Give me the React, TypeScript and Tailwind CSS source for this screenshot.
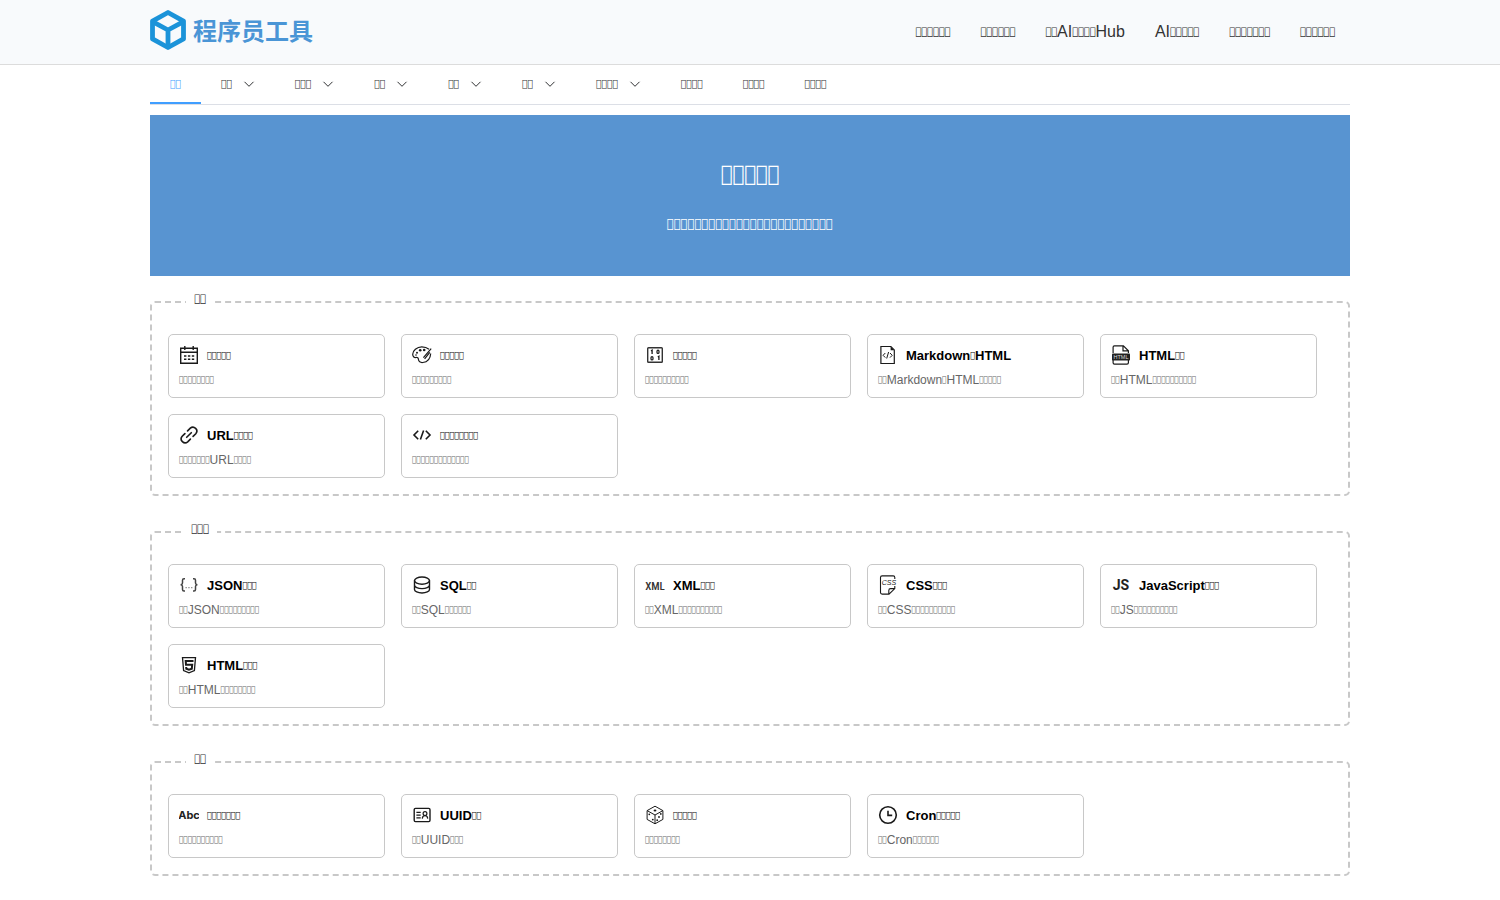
import type { ReactNode } from "react";

// "□" in the labels below stands for a code point that no font covers,
// so the browser draws the font's own missing-glyph box.
function Label({ text }: { text: string }) {
  return text.split(/(□+)/).map((part, i) =>
    part.startsWith("□") ? (
      <span key={i} className="align-[0.2em] font-['DejaVu_Sans_Condensed','DejaVu_Sans',sans-serif] text-[0.675em] leading-none font-normal">
        {part.replace(/□/g, "\uE000")}
      </span>
    ) : (
      part
    ),
  );
}

const headerLinks = ["□□□□□□", "□□□□□□", "□□AI□□□□Hub", "AI□□□□□", "□□□□□□□", "□□□□□□"];

const tabs = [
  { label: "□□", active: true },
  { label: "□□", menu: true },
  { label: "□□□", menu: true },
  { label: "□□", menu: true },
  { label: "□□", menu: true },
  { label: "□□", menu: true },
  { label: "□□□□", menu: true },
  { label: "□□□□" },
  { label: "□□□□" },
  { label: "□□□□" },
];

function Svg({ children }: { children: ReactNode }) {
  return (
    <svg viewBox="0 0 20 20" className="size-5 shrink-0" fill="none" stroke="#1a1a1a" strokeWidth="1.4" aria-hidden="true">
      {children}
    </svg>
  );
}

const icons: Record<string, ReactNode> = {
  calendar: (
    <Svg>
      <path d="M1.700 3.200h16.600v15H1.700zM1.700 7.200h16.600M5.800 1v4M14.200 1v4" />
      <path d="M5 11h2.400M8.900 11h2.400M12.800 11h2.400M5 14.300h2.400M8.900 14.300h2.400M12.800 14.300h2.400" />
    </Svg>
  ),
  palette: (
    <Svg>
      <path strokeWidth="1.2" d="M17 4.200C15 2.500 12.600 1.800 9.800 1.800 4.800 1.800.7 5.800.7 9.200c0 2.600 1.700 3.700 3.300 3.300 1.500-.4 2.300.3 2.400 1.800.2 2.200 1.900 3.500 4.400 3.200 4.500-.5 7.600-4 7.900-9" />
      <path strokeWidth="1.200" d="M19.200 3.600 11.400 12.600M17.800 7.400 12.600 13.800" />
      <g fill="#1a1a1a" stroke="none">
        <circle cx="8.200" cy="5.200" r="1.300" />
        <circle cx="12.200" cy="5" r="1.300" />
        <circle cx="5" cy="7.800" r="1" />
        <circle cx="4" cy="10" r=".8" />
      </g>
    </Svg>
  ),
  binary: (
    <Svg>
      <rect x="2.700" y="2.700" width="14.600" height="14.600" rx=".8" stroke="#333" />
      <path d="M6 5.900l1.100-.7v3.800M12.800 12l1.100-.7v3.800" strokeWidth="1.300" />
      <rect x="12" y="5.200" width="2" height="3.200" rx="1" strokeWidth="1.200" />
      <rect x="6" y="11.700" width="2" height="3.200" rx="1" strokeWidth="1.200" />
    </Svg>
  ),
  fileCode: (
    <Svg>
      <path d="M2.900 1.500h10l3.400 3.400v13.600H2.900z" strokeWidth="1.200" />
      <path d="M12.600 1.500v3.700h3.700z" fill="#1a1a1a" stroke="none" />
      <path d="M7.300 8 5.100 10.300l2.200 2.300M12 8l2.200 2.300-2.200 2.300M10.600 7l-1.900 6.500" strokeWidth="1" />
    </Svg>
  ),
  fileHtml: (
    <Svg>
      <path d="M2.100 8V2.200Q2.100.9 3.400.9h9L17.400 5.700V8M2.100 14v3.800q0 1.400 1.400 1.400h12.500q1.400 0 1.400-1.400V14M12 1v4.900h5.300" strokeWidth="1.200" />
      <rect x="1" y="8.500" width="18" height="7" rx=".8" fill="#222" stroke="none" />
      <text x="10" y="14" textAnchor="middle" fontSize="5.500" fill="#ddd" stroke="none" fontFamily="Liberation Sans, sans-serif">HTML</text>
    </Svg>
  ),
  link: (
    <Svg>
      <path strokeWidth="1.600" strokeLinecap="round" d="M8.600 5.900 11.300 3.200a3.900 3.900 0 0 1 5.500 5.500L14.100 11.400M11.400 14.100 8.700 16.800a3.900 3.900 0 0 1-5.500-5.500L5.900 8.600M7.700 12.300l4.600-4.600" />
    </Svg>
  ),
  code: (
    <Svg>
      <path strokeWidth="1.600" d="M6.200 5.800 2 10l4.200 4.200M13.800 5.800 18 10l-4.200 4.200M11.600 5.600 8.400 14.400" />
    </Svg>
  ),
  json: (
    <Svg>
      <path stroke="#444" strokeWidth="1.500" d="M6 3.700H5q-1.500 0-1.500 1.500v2.900q0 1.600-1.900 1.700 1.900.1 1.900 1.700v2.900q0 1.500 1.500 1.500h1M14 3.700h1q1.500 0 1.500 1.500v2.900q0 1.600 1.900 1.700-1.900.1-1.900 1.700v2.900q0 1.500-1.500 1.500h-1" />
      <path stroke="#888" strokeWidth="1.300" d="M6.500 12.700h1.300M9.300 12.700h1.300M12.100 12.700h1.300" />
    </Svg>
  ),
  database: (
    <Svg>
      <ellipse cx="10" cy="5.600" rx="7.500" ry="3.600" />
      <path d="M2.500 5.600v8.800C2.500 16.400 5.900 18 10 18s7.500-1.600 7.500-3.600V5.600M2.500 10c0 2 3.400 3.600 7.500 3.600s7.500-1.600 7.500-3.600" />
    </Svg>
  ),
  xml: (
    <Svg>
      <text x="10" y="14.500" textAnchor="middle" fontSize="11" fill="#333" stroke="none" fontWeight="500" fontFamily="Roboto Condensed, Roboto, sans-serif">XML</text>
    </Svg>
  ),
  css: (
    <Svg>
      <path strokeWidth="1.100" d="M16.800 4V2.500Q16.800.9 15.200.9H4.100Q2.500.9 2.500 2.500v15q0 1.600 1.600 1.600H11l5.800-5.500V11M10.800 19v-3.600q0-1.800 1.800-1.800h4.100" />
      <text x="11" y="10" textAnchor="middle" fontSize="7" fontStyle="italic" fill="#222" stroke="none" fontFamily="Liberation Sans, sans-serif">CSS</text>
    </Svg>
  ),
  js: (
    <Svg>
      <text x="10" y="15" textAnchor="middle" fontSize="14" fill="#222" stroke="none" fontWeight="700" fontFamily="Roboto, sans-serif">JS</text>
    </Svg>
  ),
  html5: (
    <Svg>
      <path strokeWidth="1.300" d="M3.500 2.600h13l-1.100 13L10 17.800l-5.400-2.200z" />
      <path strokeWidth="2" d="M14.500 5.900H6.700l.3 3.800h6.200l-.4 4-2.800 1-2.700-1-.1-1.700" />
    </Svg>
  ),
  abc: (
    <Svg>
      <text x="10" y="14" textAnchor="middle" fontSize="11" fill="#222" stroke="none" fontWeight="700" fontFamily="Inter, sans-serif">Abc</text>
    </Svg>
  ),
  idCard: (
    <Svg>
      <rect x="2.200" y="3.400" width="15.800" height="13.200" rx="1.300" />
      <path strokeWidth="1.200" d="M4.400 7.300h4.300M4.400 10.100h4.300M4.400 12.900h4.300M10.300 13.600c.1-2 1-3 2.700-3s2.600 1 2.700 3" />
      <circle cx="13" cy="8.600" r="1.900" strokeWidth="1.200" />
    </Svg>
  ),
  dice: (
    <Svg>
      <path strokeWidth="1" d="M10 1.200 17.900 5.600v8.800L10 18.800 2.100 14.400V5.600zM2.100 5.600 10 10l7.900-4.400M10 10v8.800" />
      <g fill="#1a1a1a" stroke="none">
        <ellipse cx="10" cy="5.500" rx="1.400" ry=".9" />
        <circle cx="4.300" cy="9.300" r=".9" />
        <circle cx="7.800" cy="14.600" r=".9" />
        <circle cx="12.200" cy="15.200" r=".9" />
        <circle cx="14" cy="12" r=".9" />
        <circle cx="15.800" cy="8.900" r=".9" />
      </g>
    </Svg>
  ),
  clock: (
    <Svg>
      <circle cx="10" cy="10" r="8.300" strokeWidth="1.600" />
      <path strokeWidth="1.600" d="M10 5.800v4.600h4.200" />
    </Svg>
  ),
};

type Tool = { icon: string; title: string; text: string };

const sections: { title: string; tools: Tool[] }[] = [
  {
    title: "□□",
    tools: [
      { icon: "calendar", title: "□□□□□", text: "□□□□□□□□" },
      { icon: "palette", title: "□□□□□", text: "□□□□□□□□□" },
      { icon: "binary", title: "□□□□□", text: "□□□□□□□□□□" },
      { icon: "fileCode", title: "Markdown□HTML", text: "□□Markdown□HTML□□□□□" },
      { icon: "fileHtml", title: "HTML□□", text: "□□HTML□□□□□□□□□□" },
      { icon: "link", title: "URL□□□□", text: "□□□□□□□URL□□□□" },
      { icon: "code", title: "□□□□□□□□", text: "□□□□□□□□□□□□□" },
    ],
  },
  {
    title: "□□□",
    tools: [
      { icon: "json", title: "JSON□□□", text: "□□JSON□□□□□□□□□" },
      { icon: "database", title: "SQL□□", text: "□□SQL□□□□□□" },
      { icon: "xml", title: "XML□□□", text: "□□XML□□□□□□□□□□" },
      { icon: "css", title: "CSS□□□", text: "□□CSS□□□□□□□□□□" },
      { icon: "js", title: "JavaScript□□□", text: "□□JS□□□□□□□□□□" },
      { icon: "html5", title: "HTML□□□", text: "□□HTML□□□□□□□□" },
    ],
  },
  {
    title: "□□",
    tools: [
      { icon: "abc", title: "□□□□□□□", text: "□□□□□□□□□□" },
      { icon: "idCard", title: "UUID□□", text: "□□UUID□□□" },
      { icon: "dice", title: "□□□□□", text: "□□□□□□□□" },
      { icon: "clock", title: "Cron□□□□□", text: "□□Cron□□□□□□" },
    ],
  },
];

function Logo() {
  return (
    <a href="#" className="flex items-center gap-[7px]">
      <svg viewBox="0 0 36 40" className="h-10 w-9" fill="none" stroke="#1b93d9" strokeWidth="4.800" strokeLinejoin="round" aria-hidden="true">
        <path d="M18 2.500 33.500 11.100v17.800L18 37.500 2.500 28.900V11.100z" />
        <path d="M3 11.800 18 20l15-8.200M18 20v17" />
      </svg>
      <span className="font-['Noto_Sans_CJK_SC',sans-serif] text-2xl leading-[38px] font-bold text-[#4a95d6]">程序员工具</span>
    </a>
  );
}

function ToolCard({ icon, title, text }: Tool) {
  return (
    <a href="#" className="flex flex-col gap-1.5 rounded-[5px] border border-[#c8c8c8] px-2.5 pt-2.5 pb-2">
      <span className="flex h-5 items-center gap-2">
        {icons[icon]}
        <strong className="pt-0.5 text-[13px] leading-5 font-bold text-black">
          <Label text={title} />
        </strong>
      </span>
      <span className="text-xs leading-[18px] text-[#666]">
        <Label text={text} />
      </span>
    </a>
  );
}

export default function App() {
  return (
    <div className="min-h-screen bg-white pb-6 font-['Liberation_Sans',sans-serif] text-[#303133]">
      <header className="border-b border-[#dcdcdc] bg-[#f8fafc]">
        <div className="mx-auto flex max-w-[1200px] items-start justify-between py-2.5">
          <Logo />
          <nav className="flex gap-[30px] pr-[15px]">
            {headerLinks.map((label, i) => (
              <a key={i} href="#" className="text-base leading-[44px] text-[#333]">
                <Label text={label} />
              </a>
            ))}
          </nav>
        </div>
      </header>

      <main className="mx-auto max-w-[1200px]">
        <nav className="flex border-b border-[#dcdfe6]">
          {tabs.map(({ label, active, menu }, i) => (
            <a
              key={i}
              href="#"
              className={
                active
                  ? "flex h-[39px] items-center border-b-2 border-[#409eff] px-5 text-[15px] text-[#409eff]"
                  : "flex h-[39px] items-center border-b-2 border-transparent px-5 text-[15px] text-[#303133]"
              }
            >
              <span className="pt-0.5">
                <Label text={label} />
              </span>
              {menu && (
                <svg viewBox="0 0 12 12" className="ml-[11px] size-3" fill="none" stroke="#303133" aria-hidden="true">
                  <path d="M1.500 3.800 6 8.300l4.500-4.500" />
                </svg>
              )}
            </a>
          ))}
        </nav>

        <div className="mt-2.5 flex flex-col items-center gap-5 bg-[#5894d1] pt-10 pb-[39px] text-white">
          <h1 className="text-[32px] leading-[38px]">
            <Label text="□□□□□" />
          </h1>
          <p className="text-[19px] leading-6">
            <Label text="□□□□□□□□□□□□□□□□□□□□□□□□" />
          </p>
        </div>

        <div className="mt-[25px] flex flex-col gap-[35px]">
          {sections.map(({ title, tools }, i) => (
            <section key={i} className="relative rounded-[5px] border-2 border-dashed border-[#c8c8c8] pt-[31px] pr-[31px] pb-4 pl-4">
              <div className="absolute -top-3.5 left-0 flex w-24 justify-center">
                <h2 className="bg-white px-2 text-base leading-5">
                  <Label text={title} />
                </h2>
              </div>
              <div className="grid grid-cols-5 gap-4">
                {tools.map((tool) => (
                  <ToolCard key={tool.icon} {...tool} />
                ))}
              </div>
            </section>
          ))}
        </div>
      </main>
    </div>
  );
}
